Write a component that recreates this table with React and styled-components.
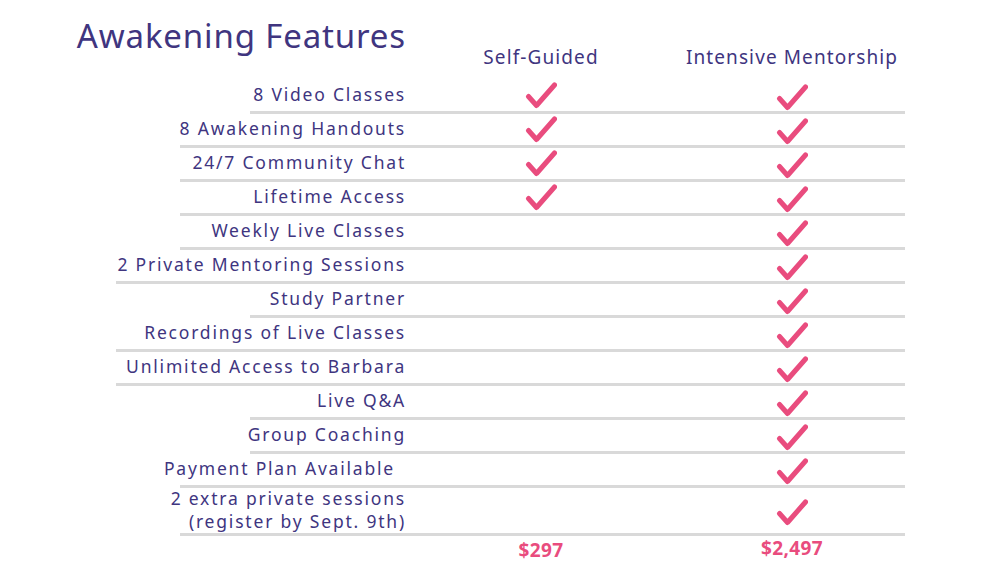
import styled, { createGlobalStyle } from "styled-components";

const GlobalStyle = createGlobalStyle`
    body {
        margin: 0;
        background: #ffffff;
        font-family: "Noto Sans", "Open Sans", sans-serif;
    }
`;

const features = [
    { label: "8 Video Classes", self: true, line: 250 },
    { label: "8 Awakening Handouts", self: true, line: 180 },
    { label: "24/7 Community Chat", self: true, line: 180 },
    { label: "Lifetime Access", self: true, line: 180 },
    { label: "Weekly Live Classes", self: false, line: 180 },
    { label: "2 Private Mentoring Sessions", self: false, line: 116 },
    { label: "Study Partner", self: false, line: 250 },
    { label: "Recordings of Live Classes", self: false, line: 116 },
    { label: "Unlimited Access to Barbara", self: false, line: 116 },
    { label: "Live Q&A", self: false, line: 250 },
    { label: "Group Coaching", self: false, line: 250 },
    { label: "Payment Plan Available", self: false, line: 180, pad: 11 },
    {
        label: "2 extra private sessions",
        sub: "(register by Sept. 9th)",
        self: false,
        line: 180,
        tall: true,
    },
];

const Page = styled.div`
    width: 1000px;
    height: 562px;
    overflow: hidden;
    color: #40357f;
`;

const Grid = styled.div`
    display: grid;
    grid-template-columns: 406px 270px 232px;
`;

const HeaderRow = styled(Grid)`
    height: 80px;
    align-items: start;
`;

const Title = styled.h1`
    margin: 0;
    padding-top: 13px;
    font-size: 33px;
    font-weight: 400;
    letter-spacing: 0.85px;
    text-align: right;
    color: #40357f;
`;

const ColHead = styled.div`
    padding-top: 44px;
    font-size: 19px;
    letter-spacing: 1.1px;
    text-align: center;
`;

const Row = styled(Grid)`
    height: ${(p) => (p.$tall ? 45 : 31)}px;
    align-items: center;
`;

const Label = styled.div`
    text-align: right;
    font-size: 17.5px;
    line-height: 23px;
    letter-spacing: 1.8px;
    padding-right: ${(p) => p.$pad || 0}px;
    margin-top: -2px;
`;

const Cell = styled.div`
    display: flex;
    justify-content: center;
    align-items: center;
    padding-top: ${(p) => p.$drop || 0}px;
`;

const Divider = styled.div`
    height: 3px;
    margin-left: ${(p) => p.$start}px;
    width: ${(p) => 905 - p.$start}px;
    background: #d9d9d9;
`;

const PriceRow = styled(Grid)`
    padding-top: 1px;
`;

const Price = styled.div`
    text-align: center;
    font-size: 19px;
    font-weight: 700;
    letter-spacing: 0.4px;
    color: #e94c7e;
    margin-top: ${(p) => p.$up || 0}px;
`;

const Check = () => (
    <svg width="32" height="27" viewBox="0 0 32 27">
        <path
            d="M3.5 14.5 L11.5 23.5 L29.5 3"
            fill="none"
            stroke="#e94c7e"
            strokeWidth="5"
            strokeLinecap="round"
            strokeLinejoin="round"
        />
    </svg>
);

const App = () => {
    return (
        <Page>
            <GlobalStyle />
            <HeaderRow>
                <Title>Awakening Features</Title>
                <ColHead>Self-Guided</ColHead>
                <ColHead>Intensive Mentorship</ColHead>
            </HeaderRow>
            {features.map((f) => (
                <div key={f.label}>
                    <Row $tall={f.tall}>
                        <Label $pad={f.pad}>
                            {f.label}
                            {f.sub && <br />}
                            {f.sub}
                        </Label>
                        <Cell>{f.self && <Check />}</Cell>
                        <Cell $drop={3}>
                            <Check />
                        </Cell>
                    </Row>
                    <Divider $start={f.line} />
                </div>
            ))}
            <PriceRow>
                <div />
                <Price>$297</Price>
                <Price $up={-2}>$2,497</Price>
            </PriceRow>
        </Page>
    );
};

export default App;
